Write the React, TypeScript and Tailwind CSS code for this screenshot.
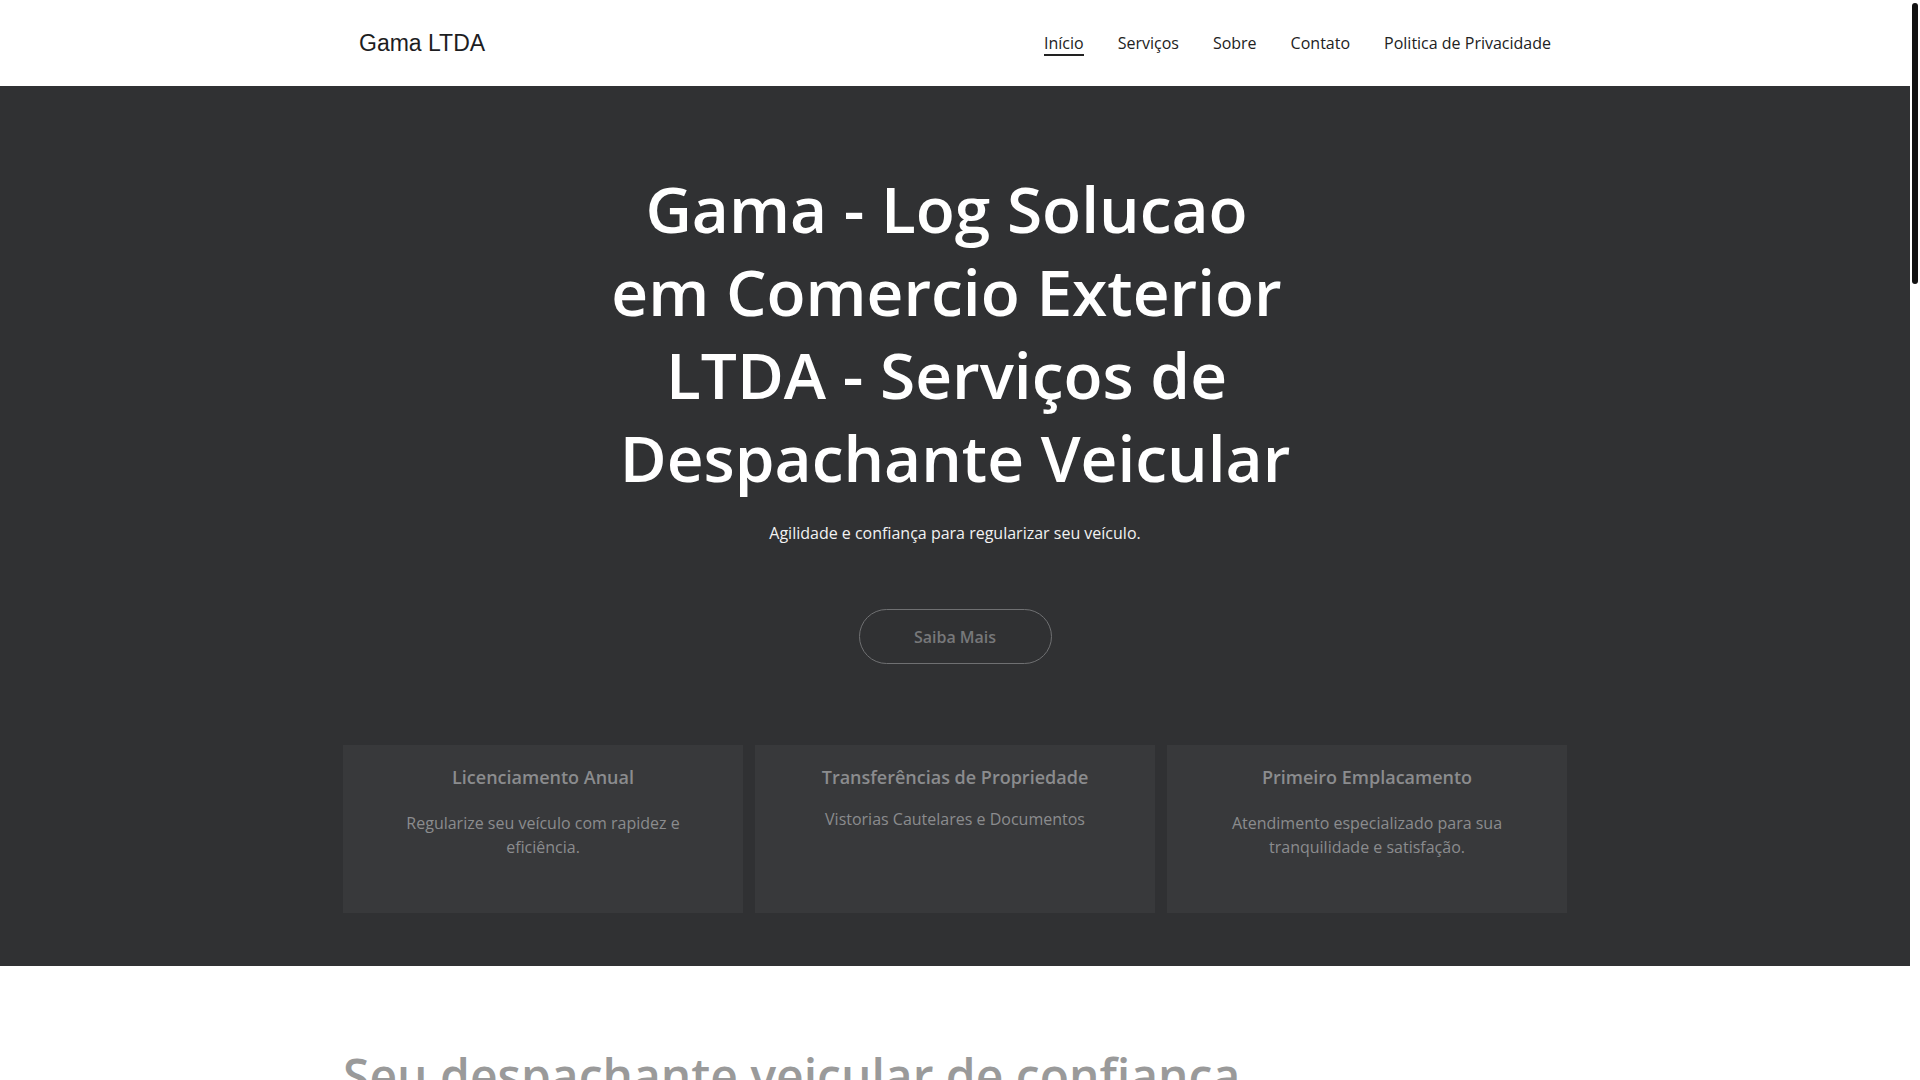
import React from 'react';

const navItems = ['Início', 'Serviços', 'Sobre', 'Contato', 'Politica de Privacidade'];

const services = [
  { title: 'Licenciamento Anual', text: 'Regularize seu veículo com rapidez e eficiência.', gap: 'mt-[20px]' },
  { title: 'Transferências de Propriedade', text: 'Vistorias Cautelares e Documentos', gap: 'mt-[16px]' },
  { title: 'Primeiro Emplacamento', text: 'Atendimento especializado para sua tranquilidade e satisfação.', gap: 'mt-[20px]' },
];

const App = () => {
  return (
    <div className="relative min-h-screen bg-white font-['Open_Sans',sans-serif]">
      {/* fake scrollbar, the reference shows one */}
      <div className="fixed right-0 top-0 z-20 h-screen w-[10px] bg-white">
        <div className="ml-[2px] mt-[3px] h-[281px] w-[6px] rounded-full bg-[#111]" />
      </div>

      <div className="mr-[10px]">
        <header className="h-[86px] bg-white">
          <div className="mx-auto flex h-full w-[1224px] items-center justify-between px-4">
            <span className="font-['Liberation_Sans',Arial,sans-serif] text-[23px] text-[#1d1d1f]">Gama LTDA</span>
            <nav className="flex items-center gap-[34px]">
              {navItems.map((item, i) => (
                <a
                  key={item}
                  href="#"
                  className={
                    i === 0
                      ? 'border-b-2 border-[#222] pt-[2px] text-[16px] leading-[22px] text-[#222]'
                      : 'border-b-2 border-transparent pt-[2px] text-[16px] leading-[22px] text-[#222]'
                  }
                >
                  {item}
                </a>
              ))}
            </nav>
          </div>
        </header>

        <section className="bg-[#303133] pt-[81px] pb-[53px]">
          <div className="mx-auto flex w-[1224px] flex-col items-center">
            <h1 className="text-center text-[64px] font-semibold leading-[83px] text-white">
              <span className="block pr-[17px]">Gama - Log Solucao</span>
              <span className="block pr-[17px]">em Comercio Exterior</span>
              <span className="block pr-[17px]">LTDA - Serviços de</span>
              <span className="block">Despachante Veicular</span>
            </h1>
            <p className="mt-[22px] text-[16px] leading-6 text-[#f2f2f2]">
              Agilidade e confiança para regularizar seu veículo.
            </p>
            <button className="mt-[64px] h-[55px] w-[193px] rounded-full border border-[#6f7072] text-[16px] font-semibold text-[#77787a]">
              Saiba Mais
            </button>
            <div className="mt-[81px] grid w-full grid-cols-3 gap-3">
              {services.map((s) => (
                <div key={s.title} className="h-[168px] bg-[#38393b] px-10 pt-[19px] text-center">
                  <h3 className="text-[18px] font-semibold leading-[27px] text-[#8b8c8e]">{s.title}</h3>
                  <p className={`${s.gap} text-[16px] leading-6 text-[#8b8c8e]`}>{s.text}</p>
                </div>
              ))}
            </div>
          </div>
        </section>

        <section className="bg-white pt-[80px] pb-20">
          <div className="mx-auto w-[1224px]">
            <h2 className="text-[48px] font-semibold leading-[60px] text-[#9a9a9a]">
              Seu despachante veicular de confiança
            </h2>
          </div>
        </section>
      </div>
    </div>
  );
};

export default App;
